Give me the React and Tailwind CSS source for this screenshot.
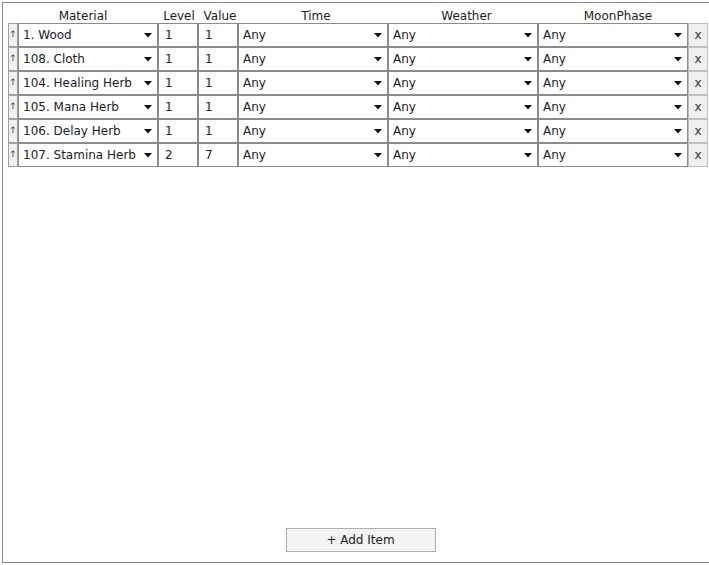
import React from "react";

const rows = [
  { material: "1. Wood", level: "1", value: "1" },
  { material: "108. Cloth", level: "1", value: "1" },
  { material: "104. Healing Herb", level: "1", value: "1" },
  { material: "105. Mana Herb", level: "1", value: "1" },
  { material: "106. Delay Herb", level: "1", value: "1" },
  { material: "107. Stamina Herb", level: "2", value: "7" },
];

const cols = "grid grid-cols-[10px_140px_40px_40px_150px_150px_150px_20px]";

const Caret = () => (
  <svg width="8" height="5" viewBox="0 0 8 5" className="shrink-0">
    <path d="M0 0 L8 0 L4 4.5 Z" fill="#111" />
  </svg>
);

const Select = ({ text }) => (
  <div className="flex items-center justify-between h-[24px] border border-[#8c8c8c] bg-white pl-[4px] pr-[5px]">
    <span className="text-[12px] text-[#222]">{text}</span>
    <Caret />
  </div>
);

const Cell = ({ text }) => (
  <div className="flex items-center h-[24px] border border-[#8c8c8c] bg-white pl-[6px] text-[12px] text-[#222]">
    {text}
  </div>
);

const App = () => {
  return (
    <div className="w-[709px] h-[565px] bg-white font-['DejaVu_Sans',sans-serif] overflow-hidden">
      <div className="ml-[2px] mt-[2px] w-[720px] h-[561px] border-l border-t border-b border-[#8a8a8a] flex flex-col">
        <div className="pl-[5px] pt-[4px]">
          <div className={`${cols} h-[16px] items-center text-[12px] text-[#222] text-center`}>
            <div className="col-span-2">Material</div>
            <div className="pl-[2px]">Level</div>
            <div className="pl-[4px]">Value</div>
            <div className="pl-[6px]">Time</div>
            <div className="pl-[7px]">Weather</div>
            <div className="pl-[10px]">MoonPhase</div>
            <div />
          </div>
          {rows.map((r, i) => (
            <div key={i} className={cols}>
              <div className="flex items-center justify-center h-[24px] border border-[#a0a0a0] bg-[#f0f0f0] text-[9px] text-[#444]">
                ↑
              </div>
              <Select text={r.material} />
              <Cell text={r.level} />
              <Cell text={r.value} />
              <Select text="Any" />
              <Select text="Any" />
              <Select text="Any" />
              <div className="flex items-center justify-center h-[24px] border border-[#c0c0c0] bg-[#f0f0f0] text-[12px] text-[#333]">
                x
              </div>
            </div>
          ))}
        </div>
        <div className="flex-1" />
        <div className="w-[715px] flex justify-center pb-[10px]">
          <button className="w-[150px] h-[24px] border border-[#adadad] bg-[#f3f3f3] text-[12px] text-[#222]">
            + Add Item
          </button>
        </div>
      </div>
    </div>
  );
};

export default App;
